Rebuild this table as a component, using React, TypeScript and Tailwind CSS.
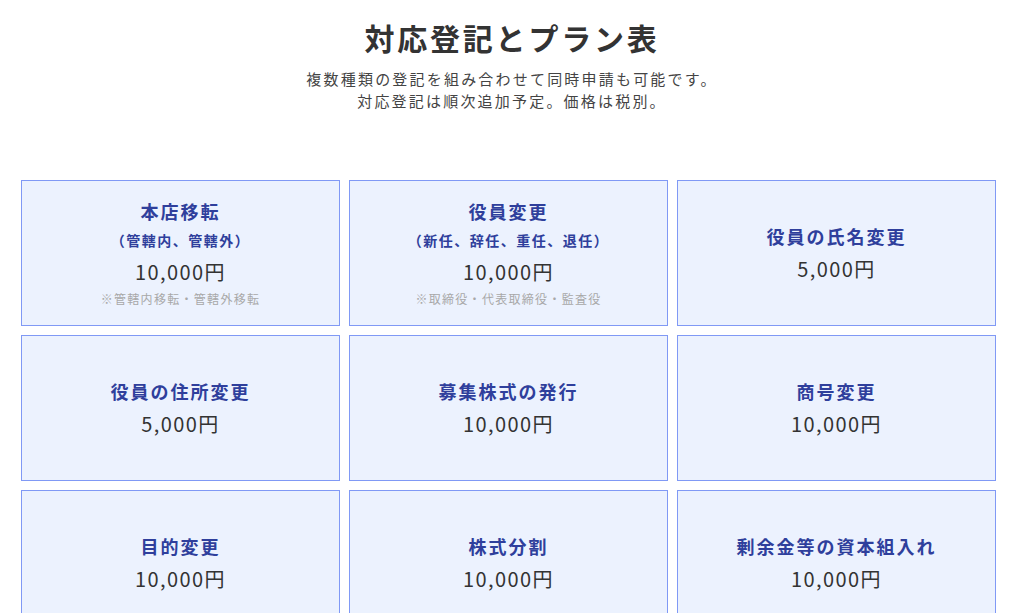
import React from "react";

type Plan = {
  name: string;
  sub?: string;
  price: string;
  note?: string;
};

const plans: Plan[] = [
  { name: "本店移転", sub: "（管轄内、管轄外）", price: "10,000円", note: "※管轄内移転・管轄外移転" },
  { name: "役員変更", sub: "（新任、辞任、重任、退任）", price: "10,000円", note: "※取締役・代表取締役・監査役" },
  { name: "役員の氏名変更", price: "5,000円" },
  { name: "役員の住所変更", price: "5,000円" },
  { name: "募集株式の発行", price: "10,000円" },
  { name: "商号変更", price: "10,000円" },
  { name: "目的変更", price: "10,000円" },
  { name: "株式分割", price: "10,000円" },
  { name: "剰余金等の資本組入れ", price: "10,000円" },
];

function PlanCard({ plan }: { plan: Plan }) {
  return (
    <div className="h-[146px] border border-[#8099f5] bg-[#ecf2fe] flex flex-col items-center justify-center text-center">
      <p className="text-[18px] leading-[26px] font-bold tracking-[2px] text-[#2f3f9c]">{plan.name}</p>
      {plan.sub && (
        <p className="mt-[4px] text-[14px] leading-[24px] font-bold tracking-[1.5px] text-[#2f3f9c]">{plan.sub}</p>
      )}
      <p className={`${plan.sub ? "mt-[6px]" : "mt-[6px]"} text-[20px] leading-[28px] tracking-[1.4px] text-[#333]`}>
        {plan.price}
      </p>
      {plan.note && (
        <p className="mt-[3px] text-[12px] leading-[20px] tracking-[1.3px] text-[#a8a8a8]">{plan.note}</p>
      )}
    </div>
  );
}

export default function App() {
  return (
    <div
      className="min-h-[613px] bg-white overflow-hidden"
      style={{ fontFamily: '"Noto Sans CJK JP", "Noto Sans", sans-serif' }}
    >
      <div className="pt-[16px] text-center">
        <h1 className="text-[30px] leading-[42px] font-bold tracking-[2.8px] text-[#333]">対応登記とプラン表</h1>
        <p className="mt-[10px] text-[15px] leading-[22px] tracking-[2.2px] text-[#444]">
          複数種類の登記を組み合わせて同時申請も可能です。
          <br />
          対応登記は順次追加予定。価格は税別。
        </p>
      </div>
      <div className="mt-[68px] ml-[21px] w-[975px] grid grid-cols-3 gap-[9px]">
        {plans.map((p) => (
          <PlanCard key={p.name} plan={p} />
        ))}
      </div>
    </div>
  );
}
